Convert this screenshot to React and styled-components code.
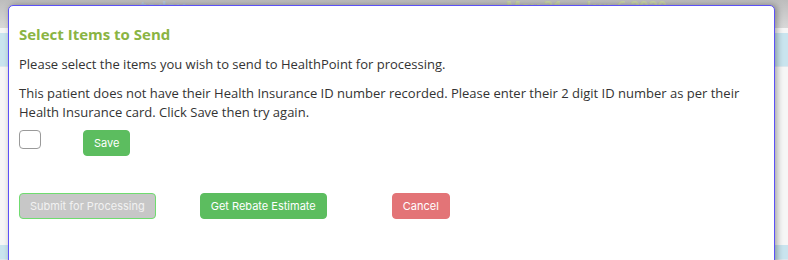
import styled, { createGlobalStyle } from "styled-components"

const GlobalStyle = createGlobalStyle`
  html, body {
    margin: 0;
    padding: 0;
    width: 788px;
    height: 260px;
    overflow: hidden;
    background: #f4f4f4;
    font-family: "Open Sans", sans-serif;
  }
`

const Page = styled.div`
  position: relative;
  width: 788px;
  height: 260px;
  overflow: hidden;
  background: #f6f6f6;
`

const TopBar = styled.div`
  height: 28px;
  background: linear-gradient(#bdbdbd, #d8d8d8);
  display: flex;
  align-items: flex-start;
  padding-left: 140px;
  color: #b9c9dc;
  font-size: 16px;
  font-weight: 700;
  line-height: 14px;
`

const BarLabel = styled.span`
  margin-left: ${(p) => p.ml || 0}px;
  color: ${(p) => p.color || "#b9c9dc"};
`

const Band = styled.div`
  height: ${(p) => p.h}px;
  margin-top: ${(p) => p.mt}px;
  background: #c9e4ee;
  border-bottom: 1px solid #dde8ee;
`

const Overlay = styled.div`
  position: absolute;
  top: 5px;
  left: 8px;
  width: 767px;
  height: 270px;
  background: #fff;
  border: 1px solid #5b50f7;
  border-radius: 5px 5px 0 0;
  box-shadow: 2px 0 6px rgba(0, 0, 0, 0.35);
  box-sizing: border-box;
  padding: 18px 10px 10px 10px;
  color: #333;
`

const Title = styled.h3`
  margin: 0 0 11px 0;
  font-size: 15px;
  font-weight: 700;
  color: #8ab443;
  line-height: 20px;
`

const Text = styled.p`
  margin: 0 0 ${(p) => p.mb ?? 10}px 0;
  font-size: 13px;
  line-height: 19px;
`

const Row = styled.div`
  display: flex;
  align-items: flex-start;
  margin-top: ${(p) => p.mt || 0}px;
`

const Check = styled.input.attrs({ type: "checkbox" })`
  appearance: none;
  margin: 0;
  width: 22px;
  height: 19px;
  border: 1px solid #9a9a9a;
  border-radius: 4px;
  background: #fff;
  box-sizing: border-box;
`

const colors = {
  green: { bg: "#5cbd5f", border: "#5cbd5f", fg: "#fff" },
  grey: { bg: "#c7c7c7", border: "#6fdc6f", fg: "#f2f2f2" },
  red: { bg: "#e37477", border: "#e37477", fg: "#fff" },
}

const Button = styled.button`
  height: 26px;
  padding: 0 ${(p) => p.px || 10}px;
  margin-left: ${(p) => p.ml || 0}px;
  border-radius: 4px;
  border: 1px solid ${(p) => colors[p.kind].border};
  background: ${(p) => colors[p.kind].bg};
  color: ${(p) => colors[p.kind].fg};
  font-family: Inter, "Liberation Sans", sans-serif;
  font-size: 11px;
  box-sizing: border-box;
`

const App = () => {
  return (
    <>
      <GlobalStyle />
      <Page>
        <TopBar>
          <BarLabel>today</BarLabel>
          <BarLabel ml={320} color="#c9d4a8">May 31 — Jun 6 2020</BarLabel>
        </TopBar>
        <Band h={33} mt={5} />
        <Band h={14} mt={178} />
        <Overlay>
          <Title>Select Items to Send</Title>
          <Text>Please select the items you wish to send to HealthPoint for processing.</Text>
          <Text mb={8}>
            This patient does not have their Health Insurance ID number recorded. Please enter their 2 digit ID number as per their
            Health Insurance card. Click Save then try again.
          </Text>
          <Row>
            <Check />
            <Button kind="green" ml={42} px={10}>Save</Button>
          </Row>
          <Row mt={37}>
            <Button kind="grey">Submit for Processing</Button>
            <Button kind="green" ml={44}>Get Rebate Estimate</Button>
            <Button kind="red" ml={65}>Cancel</Button>
          </Row>
        </Overlay>
      </Page>
    </>
  )
}

export default App
